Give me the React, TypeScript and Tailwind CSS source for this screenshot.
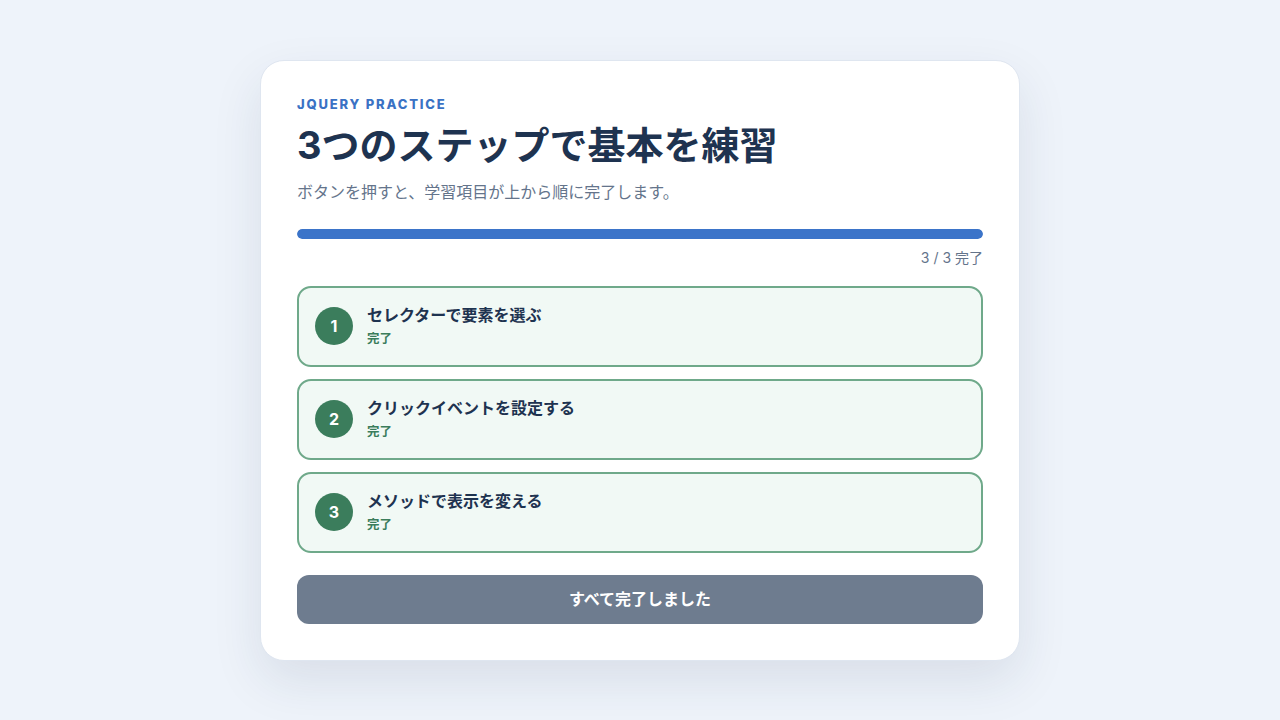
const steps = [
  'セレクターで要素を選ぶ',
  'クリックイベントを設定する',
  'メソッドで表示を変える',
]

export default function App() {
  return (
    <div
      className="flex min-h-screen items-center justify-center bg-[#eef3fa]"
      style={{ fontFamily: 'Inter, "Noto Sans CJK JP", sans-serif' }}
    >
      <div className="w-[760px] rounded-[24px] border border-[#dfe6f0] bg-white px-9 pt-[37px] pb-9 shadow-[0_20px_50px_rgba(30,51,80,0.10)]">
        <p className="text-[13px] font-extrabold tracking-[0.14em] text-[#3a72c4] leading-[12px]">
          JQUERY PRACTICE
        </p>
        <h1 className="mt-[10px] text-[38px] font-bold leading-[50px] text-[#1e3350]">
          3つのステップで基本を練習
        </h1>
        <p className="mt-[10px] text-[16px] leading-[24px] text-[#64748b]">
          ボタンを押すと、学習項目が上から順に完了します。
        </p>

        <div className="mt-[25px] h-[10px] w-full overflow-hidden rounded-full bg-[#e2e8f0]">
          <div className="h-full w-full rounded-full bg-[#3b74c9]" />
        </div>
        <p className="mt-[9px] text-right text-[14px] leading-[20px] text-[#64748b]">3 / 3 完了</p>

        <ul className="mt-[18px] flex flex-col gap-3">
          {steps.map((s, i) => (
            <li
              key={s}
              className="flex h-[81px] items-center gap-[14px] rounded-[14px] border-2 border-[#6fa98a] bg-[#f1f9f5] px-4"
            >
              <span className="flex h-[38px] w-[38px] shrink-0 items-center justify-center rounded-full bg-[#3b7d5c] text-[16px] font-bold text-white">
                {i + 1}
              </span>
              <div>
                <p className="text-[16px] font-bold leading-[20px] text-[#1e3350]">{s}</p>
                <p className="mt-[6px] text-[12.5px] font-bold leading-[16px] text-[#3b7d5c]">完了</p>
              </div>
            </li>
          ))}
        </ul>

        <button className="mt-[22px] h-[49px] w-full rounded-[12px] bg-[#6e7c8f] text-[16px] font-bold text-white">
          すべて完了しました
        </button>
      </div>
    </div>
  )
}
